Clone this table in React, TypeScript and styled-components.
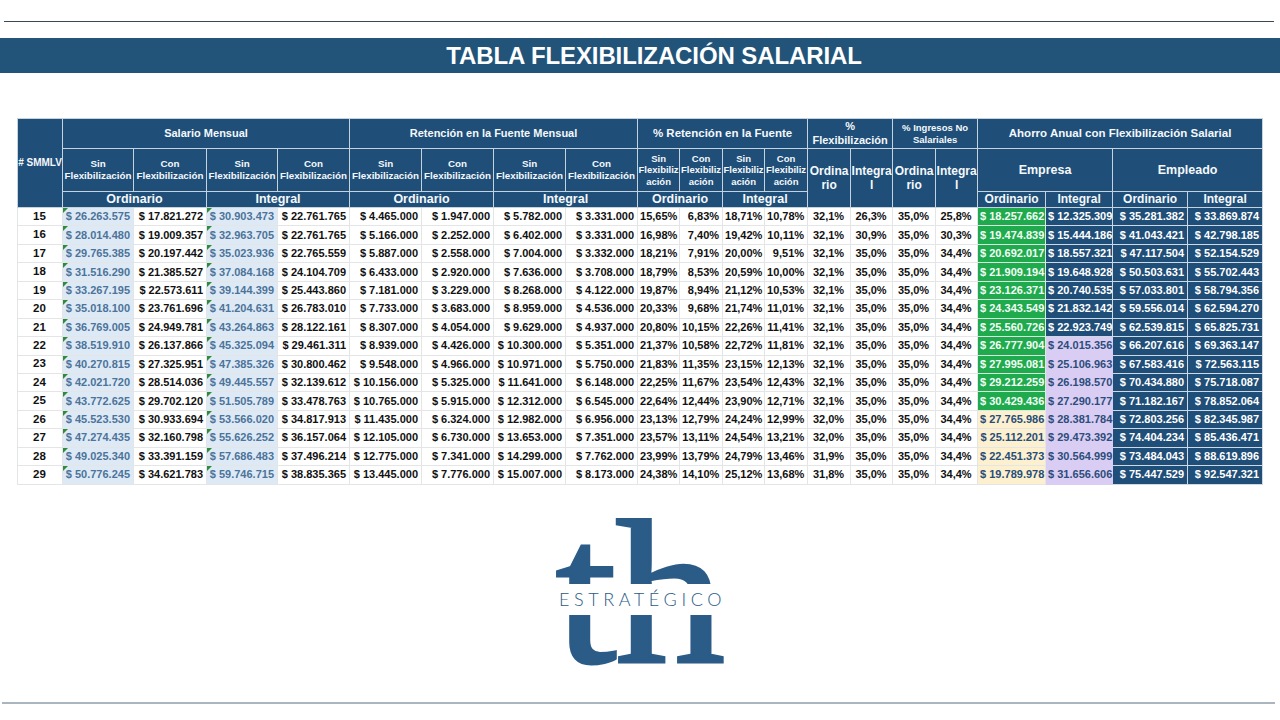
import React from "react";
import styled, { createGlobalStyle, css } from "styled-components";

const GlobalStyle = createGlobalStyle`
  html, body { margin: 0; padding: 0; background: #ffffff; }
  body { font-family: "Liberation Sans", Arial, sans-serif; }
`;

const Page = styled.div`
  width: 1280px;
  height: 720px;
  display: flex;
  flex-direction: column;
  overflow: hidden;
  background: #ffffff;
`;

const TopRule = styled.div`
  height: 1px;
  margin: 21px 6px 0 4px;
  background: #3c4852;
`;

const Banner = styled.div`
  height: 35px;
  margin-top: 16px;
  background: #22547a;
  display: flex;
  align-items: center;
  justify-content: center;
  padding-left: 28px;
`;

const Title = styled.h1`
  margin: 0;
  font-family: "Liberation Sans", Arial, sans-serif;
  font-size: 24px;
  font-weight: 700;
  color: #ffffff;
  letter-spacing: -0.1px;
`;

const TableWrap = styled.div`
  margin: 45px 0 0 17px;
`;

const Table = styled.table`
  width: 1245px;
  table-layout: fixed;
  border-collapse: collapse;
  font-family: "Liberation Sans", Arial, sans-serif;
`;

const HeadRow = styled.tr<{ $h: number }>`
  height: ${(p) => p.$h}px;
`;

const Head = styled.th<{ $size?: number }>`
  background: #1f4e78;
  color: #f4f8fb;
  border: 1.5px solid #c5d3df;
  font-weight: 700;
  font-size: ${(p) => p.$size ?? 11}px;
  line-height: 1.2;
  text-align: center;
  vertical-align: middle;
  padding: 0;
  overflow: hidden;
  white-space: nowrap;
`;

const DataRow = styled.tr`
  height: 18.45px;
`;

type Variant =
  | "idx"
  | "num"
  | "sin"
  | "pct"
  | "pctc"
  | "green"
  | "cream"
  | "lav"
  | "blue";

const variantCss: Record<Variant, ReturnType<typeof css>> = {
  idx: css`
    text-align: center;
    font-size: 11.5px;
    color: #111;
  `,
  num: css`
    color: #111;
  `,
  sin: css`
    background: #ddeaf6;
    color: #4d7399;
    &::before {
      content: "";
      position: absolute;
      top: 0;
      left: 0;
      border-top: 5px solid #2e8b3d;
      border-right: 5px solid transparent;
    }
  `,
  pct: css`
    color: #111;
  `,
  pctc: css`
    text-align: center;
    color: #111;
  `,
  green: css`
    background: #1faa4e;
    color: #f3fff5;
    border-color: #d9eadf;
    padding-right: 1px;
  `,
  cream: css`
    background: #fdf0cf;
    color: #264d79;
    padding-right: 1px;
  `,
  lav: css`
    background: #dacdf4;
    color: #2c4d7b;
    border-color: #dacdf4;
    padding-right: 1px;
  `,
  blue: css`
    background: #1f4e78;
    color: #ffffff;
    border-color: #cdd9e4;
  `,
};

const Cell = styled.td<{ $v: Variant }>`
  position: relative;
  padding: 0 3px 0 2px;
  font-size: 11px;
  font-weight: 700;
  text-align: right;
  white-space: nowrap;
  line-height: 1;
  border: 1px solid #e3e5e7;
  ${(p) => variantCss[p.$v]}
`;

const LogoArea = styled.div`
  display: flex;
  justify-content: center;
  margin-top: 5px;
`;

const LogoMark = styled.div`
  position: relative;
  height: 175px;
`;

const LogoLetters = styled.span`
  display: block;
  font-family: "Liberation Serif", "Times New Roman", serif;
  font-size: 205px;
  line-height: 1;
  color: #2b5b87;
  -webkit-text-stroke: 3px #2b5b87;
  letter-spacing: -1px;
  transform: scaleX(1.07);
`;

const LogoBand = styled.span`
  position: absolute;
  left: -16px;
  right: -16px;
  top: 94px;
  height: 31px;
  background: #ffffff;
  display: flex;
  align-items: center;
  justify-content: center;
  padding-left: 5px;
  font-family: Lato, "Open Sans", sans-serif;
  font-weight: 300;
  font-size: 18px;
  letter-spacing: 4.6px;
  color: #2b5b87;
`;

const BottomRule = styled.div`
  height: 2px;
  margin: auto 5px 16px 2px;
  background: #aab6bf;
`;

const colWidths = [45, 71, 73, 71, 72, 72, 72, 72, 72, 42, 43, 42, 43, 43, 42, 43, 42, 68, 67, 75, 75];

const rows: string[][] = [
  ["15", "$ 26.263.575", "$ 17.821.272", "$ 30.903.473", "$ 22.761.765", "$ 4.465.000", "$ 1.947.000", "$ 5.782.000", "$ 3.331.000", "15,65%", "6,83%", "18,71%", "10,78%", "32,1%", "26,3%", "35,0%", "25,8%", "$ 18.257.662", "$ 12.325.309", "$ 35.281.382", "$ 33.869.874"],
  ["16", "$ 28.014.480", "$ 19.009.357", "$ 32.963.705", "$ 22.761.765", "$ 5.166.000", "$ 2.252.000", "$ 6.402.000", "$ 3.331.000", "16,98%", "7,40%", "19,42%", "10,11%", "32,1%", "30,9%", "35,0%", "30,3%", "$ 19.474.839", "$ 15.444.186", "$ 41.043.421", "$ 42.798.185"],
  ["17", "$ 29.765.385", "$ 20.197.442", "$ 35.023.936", "$ 22.765.559", "$ 5.887.000", "$ 2.558.000", "$ 7.004.000", "$ 3.332.000", "18,21%", "7,91%", "20,00%", "9,51%", "32,1%", "35,0%", "35,0%", "34,4%", "$ 20.692.017", "$ 18.557.321", "$ 47.117.504", "$ 52.154.529"],
  ["18", "$ 31.516.290", "$ 21.385.527", "$ 37.084.168", "$ 24.104.709", "$ 6.433.000", "$ 2.920.000", "$ 7.636.000", "$ 3.708.000", "18,79%", "8,53%", "20,59%", "10,00%", "32,1%", "35,0%", "35,0%", "34,4%", "$ 21.909.194", "$ 19.648.928", "$ 50.503.631", "$ 55.702.443"],
  ["19", "$ 33.267.195", "$ 22.573.611", "$ 39.144.399", "$ 25.443.860", "$ 7.181.000", "$ 3.229.000", "$ 8.268.000", "$ 4.122.000", "19,87%", "8,94%", "21,12%", "10,53%", "32,1%", "35,0%", "35,0%", "34,4%", "$ 23.126.371", "$ 20.740.535", "$ 57.033.801", "$ 58.794.356"],
  ["20", "$ 35.018.100", "$ 23.761.696", "$ 41.204.631", "$ 26.783.010", "$ 7.733.000", "$ 3.683.000", "$ 8.959.000", "$ 4.536.000", "20,33%", "9,68%", "21,74%", "11,01%", "32,1%", "35,0%", "35,0%", "34,4%", "$ 24.343.549", "$ 21.832.142", "$ 59.556.014", "$ 62.594.270"],
  ["21", "$ 36.769.005", "$ 24.949.781", "$ 43.264.863", "$ 28.122.161", "$ 8.307.000", "$ 4.054.000", "$ 9.629.000", "$ 4.937.000", "20,80%", "10,15%", "22,26%", "11,41%", "32,1%", "35,0%", "35,0%", "34,4%", "$ 25.560.726", "$ 22.923.749", "$ 62.539.815", "$ 65.825.731"],
  ["22", "$ 38.519.910", "$ 26.137.866", "$ 45.325.094", "$ 29.461.311", "$ 8.939.000", "$ 4.426.000", "$ 10.300.000", "$ 5.351.000", "21,37%", "10,58%", "22,72%", "11,81%", "32,1%", "35,0%", "35,0%", "34,4%", "$ 26.777.904", "$ 24.015.356", "$ 66.207.616", "$ 69.363.147"],
  ["23", "$ 40.270.815", "$ 27.325.951", "$ 47.385.326", "$ 30.800.462", "$ 9.548.000", "$ 4.966.000", "$ 10.971.000", "$ 5.750.000", "21,83%", "11,35%", "23,15%", "12,13%", "32,1%", "35,0%", "35,0%", "34,4%", "$ 27.995.081", "$ 25.106.963", "$ 67.583.416", "$ 72.563.115"],
  ["24", "$ 42.021.720", "$ 28.514.036", "$ 49.445.557", "$ 32.139.612", "$ 10.156.000", "$ 5.325.000", "$ 11.641.000", "$ 6.148.000", "22,25%", "11,67%", "23,54%", "12,43%", "32,1%", "35,0%", "35,0%", "34,4%", "$ 29.212.259", "$ 26.198.570", "$ 70.434.880", "$ 75.718.087"],
  ["25", "$ 43.772.625", "$ 29.702.120", "$ 51.505.789", "$ 33.478.763", "$ 10.765.000", "$ 5.915.000", "$ 12.312.000", "$ 6.545.000", "22,64%", "12,44%", "23,90%", "12,71%", "32,1%", "35,0%", "35,0%", "34,4%", "$ 30.429.436", "$ 27.290.177", "$ 71.182.167", "$ 78.852.064"],
  ["26", "$ 45.523.530", "$ 30.933.694", "$ 53.566.020", "$ 34.817.913", "$ 11.435.000", "$ 6.324.000", "$ 12.982.000", "$ 6.956.000", "23,13%", "12,79%", "24,24%", "12,99%", "32,0%", "35,0%", "35,0%", "34,4%", "$ 27.765.986", "$ 28.381.784", "$ 72.803.256", "$ 82.345.987"],
  ["27", "$ 47.274.435", "$ 32.160.798", "$ 55.626.252", "$ 36.157.064", "$ 12.105.000", "$ 6.730.000", "$ 13.653.000", "$ 7.351.000", "23,57%", "13,11%", "24,54%", "13,21%", "32,0%", "35,0%", "35,0%", "34,4%", "$ 25.112.201", "$ 29.473.392", "$ 74.404.234", "$ 85.436.471"],
  ["28", "$ 49.025.340", "$ 33.391.159", "$ 57.686.483", "$ 37.496.214", "$ 12.775.000", "$ 7.341.000", "$ 14.299.000", "$ 7.762.000", "23,99%", "13,79%", "24,79%", "13,46%", "31,9%", "35,0%", "35,0%", "34,4%", "$ 22.451.373", "$ 30.564.999", "$ 73.484.043", "$ 88.619.896"],
  ["29", "$ 50.776.245", "$ 34.621.783", "$ 59.746.715", "$ 38.835.365", "$ 13.445.000", "$ 7.776.000", "$ 15.007.000", "$ 8.173.000", "24,38%", "14,10%", "25,12%", "13,68%", "31,8%", "35,0%", "35,0%", "34,4%", "$ 19.789.978", "$ 31.656.606", "$ 75.447.529", "$ 92.547.321"],
];

function variantFor(col: number, rowIdx: number): Variant {
  const smmlv = 15 + rowIdx;
  if (col === 0) return "idx";
  if (col === 1 || col === 3) return "sin";
  if (col >= 2 && col <= 8) return "num";
  if (col >= 9 && col <= 12) return "pct";
  if (col >= 13 && col <= 16) return "pctc";
  if (col === 17) return smmlv <= 25 ? "green" : "cream";
  if (col === 18) return smmlv <= 21 ? "blue" : "lav";
  return "blue";
}

const SinCon = ({ kind }: { kind: "Sin" | "Con" }) => (
  <>
    {kind}
    <br />
    Flexibilización
  </>
);

const SinConNarrow = ({ kind }: { kind: "Sin" | "Con" }) => (
  <>
    {kind}
    <br />
    Flexibiliz
    <br />
    ación
  </>
);

export default function App() {
  return (
    <Page>
      <GlobalStyle />
      <TopRule />
      <Banner>
        <Title>TABLA FLEXIBILIZACIÓN SALARIAL</Title>
      </Banner>
      <TableWrap>
        <Table>
          <colgroup>
            {colWidths.map((w, i) => (
              <col key={i} style={{ width: w }} />
            ))}
          </colgroup>
          <thead>
            <HeadRow $h={30}>
              <Head rowSpan={3} $size={10}># SMMLV</Head>
              <Head colSpan={4} $size={11}>Salario Mensual</Head>
              <Head colSpan={4} $size={11}>Retención en la Fuente Mensual</Head>
              <Head colSpan={4} $size={11.5}>% Retención en la Fuente</Head>
              <Head colSpan={2} $size={11}>
                %
                <br />
                Flexibilización
              </Head>
              <Head colSpan={2} $size={9.5}>
                % Ingresos No
                <br />
                Salariales
              </Head>
              <Head colSpan={4} $size={11.5}>Ahorro Anual con Flexibilización Salarial</Head>
            </HeadRow>
            <HeadRow $h={43}>
              {[0, 1].map((g) => (
                <React.Fragment key={`s${g}`}>
                  <Head $size={9.8}><SinCon kind="Sin" /></Head>
                  <Head $size={9.8}><SinCon kind="Con" /></Head>
                </React.Fragment>
              ))}
              {[0, 1].map((g) => (
                <React.Fragment key={`r${g}`}>
                  <Head $size={9.8}><SinCon kind="Sin" /></Head>
                  <Head $size={9.8}><SinCon kind="Con" /></Head>
                </React.Fragment>
              ))}
              {[0, 1].map((g) => (
                <React.Fragment key={`p${g}`}>
                  <Head $size={9.5}><SinConNarrow kind="Sin" /></Head>
                  <Head $size={9.5}><SinConNarrow kind="Con" /></Head>
                </React.Fragment>
              ))}
              {[0, 1].map((g) => (
                <React.Fragment key={`f${g}`}>
                  <Head rowSpan={2} $size={12}>
                    Ordina
                    <br />
                    rio
                  </Head>
                  <Head rowSpan={2} $size={12}>
                    Integra
                    <br />l
                  </Head>
                </React.Fragment>
              ))}
              <Head colSpan={2} $size={12.5}>Empresa</Head>
              <Head colSpan={2} $size={12.5}>Empleado</Head>
            </HeadRow>
            <HeadRow $h={16}>
              {[0, 1, 2].map((g) => (
                <React.Fragment key={`o${g}`}>
                  <Head colSpan={2} $size={12.5}>Ordinario</Head>
                  <Head colSpan={2} $size={12.5}>Integral</Head>
                </React.Fragment>
              ))}
              <Head $size={12}>Ordinario</Head>
              <Head $size={12}>Integral</Head>
              <Head $size={12}>Ordinario</Head>
              <Head $size={12}>Integral</Head>
            </HeadRow>
          </thead>
          <tbody>
            {rows.map((r, ri) => (
              <DataRow key={r[0]}>
                {r.map((v, ci) => (
                  <Cell key={ci} $v={variantFor(ci, ri)}>
                    {v}
                  </Cell>
                ))}
              </DataRow>
            ))}
          </tbody>
        </Table>
      </TableWrap>
      <LogoArea>
        <LogoMark>
          <LogoLetters>th</LogoLetters>
          <LogoBand>ESTRATÉGICO</LogoBand>
        </LogoMark>
      </LogoArea>
      <BottomRule />
    </Page>
  );
}
